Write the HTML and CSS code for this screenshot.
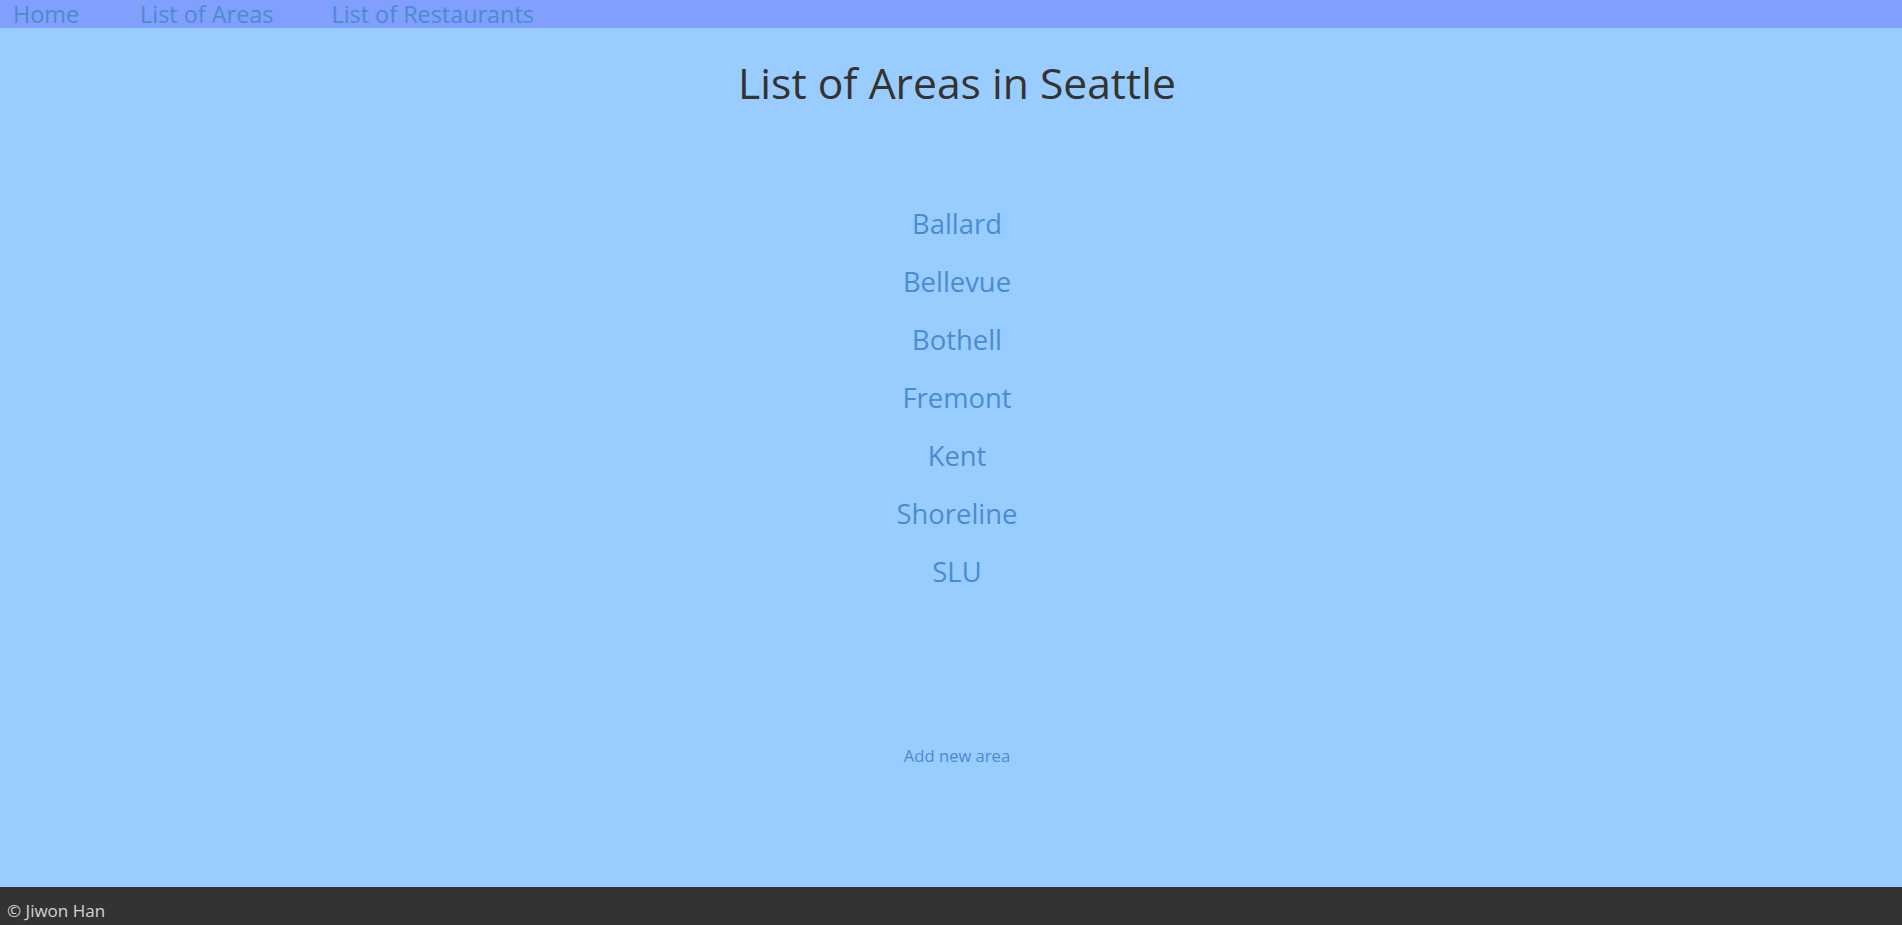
FILE: index.html
```html
<!DOCTYPE html>
<html lang="en">
<head>
<meta charset="utf-8">
<title>List of Areas in Seattle</title>
<link rel="stylesheet" href="styles.css">
</head>
<body>
<div class="page">
  <nav class="topnav">
    <a class="nav-link nav-home" href="#">Home</a>
    <a class="nav-link" href="#">List of Areas</a>
    <a class="nav-link" href="#">List of Restaurants</a>
  </nav>
  <main class="content">
    <h1 class="title">List of Areas in Seattle</h1>
    <ul class="areas">
      <li><a href="#">Ballard</a></li>
      <li><a href="#">Bellevue</a></li>
      <li><a href="#">Bothell</a></li>
      <li><a href="#">Fremont</a></li>
      <li><a href="#">Kent</a></li>
      <li><a href="#">Shoreline</a></li>
      <li><a href="#">SLU</a></li>
    </ul>
    <a class="add-link" href="#">Add new area</a>
  </main>
  <footer class="footer">© Jiwon Han</footer>
</div>
</body>
</html>
```

FILE: styles.css
```css
html, body {
  margin: 0;
  padding: 0;
}
body {
  font-family: "Open Sans", "Noto Sans", sans-serif;
  background: #99ccff;
}
.page {
  display: flex;
  flex-direction: column;
  min-height: 100vh;
}
a {
  text-decoration: none;
  color: #4a8ccf;
}
.topnav {
  height: 28px;
  background: #809fff;
  display: flex;
  align-items: flex-start;
  gap: 58px;
  padding-left: 13px;
  font-size: 23.4px;
  line-height: 28px;
}
.nav-link {
  color: #4a8ccc;
  line-height: 28px;
}
.nav-home {
  margin-right: 3px;
}
.content {
  flex: 1;
  display: flex;
  flex-direction: column;
  align-items: center;
  padding-left: 12px;
}
.title {
  margin: 26px 0 0;
  font-size: 42.6px;
  line-height: 56px;
  font-weight: 400;
  color: #36322f;
}
.areas {
  list-style: none;
  margin: 85px 0 0;
  padding: 0;
  text-align: center;
  font-size: 27.4px;
  line-height: 58px;
}
.add-link {
  margin-top: 143px;
  font-size: 16.6px;
  line-height: 24px;
}
.footer {
  height: 38px;
  box-sizing: border-box;
  background: #333333;
  color: #d0d3d6;
  font-size: 17px;
  line-height: 24px;
  padding: 12px 7px 2px;
}
```
